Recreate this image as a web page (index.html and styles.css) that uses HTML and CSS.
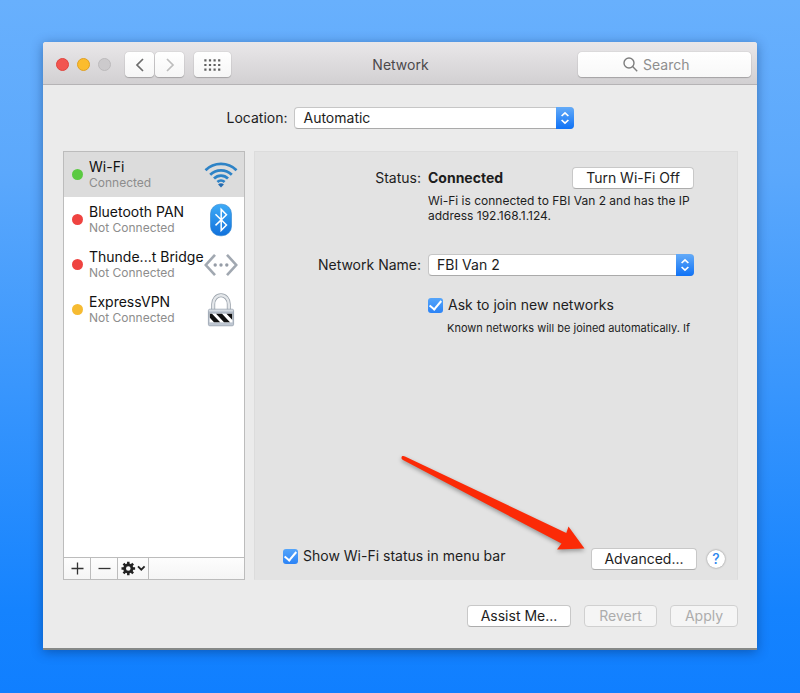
FILE: index.html
```html
<!DOCTYPE html>
<html lang="en">
<head>
<meta charset="utf-8">
<meta name="viewport" content="width=device-width, initial-scale=1">
<title>Network</title>
<link rel="stylesheet" href="styles.css">
</head>
<body>
<main class="window">
  <header class="titlebar">
    <div class="tools">
      <div class="lights">
        <button class="light close" aria-label="Close"></button>
        <button class="light minimize" aria-label="Minimize"></button>
        <button class="light zoom" aria-label="Zoom" disabled></button>
      </div>
      <div class="nav">
        <button class="tool" aria-label="Back"><svg width="10" height="16" viewBox="0 0 10 16"><path d="M8 2 2 8l6 6" fill="none" stroke="#6c6c6c" stroke-width="1.7"/></svg></button>
        <button class="tool" aria-label="Forward" disabled><svg width="10" height="16" viewBox="0 0 10 16"><path d="m2 2 6 6-6 6" fill="none" stroke="#bdbdbd" stroke-width="1.7"/></svg></button>
      </div>
      <button class="tool grid" aria-label="Show all"><svg width="17" height="12" viewBox="0 0 17 12" fill="none" stroke="#606060" stroke-width="2.2" stroke-dasharray="2.2 2.4"><path d="M.3 1.4h16M.3 6h16M.3 10.6h16"/></svg></button>
    </div>
    <h1 class="title">Network</h1>
    <label class="search">
      <svg width="15" height="15" viewBox="0 0 15 15" fill="none" stroke="#7d7d7d" stroke-width="1.4"><circle cx="6" cy="6" r="5"/><path d="m9.6 9.6 4.6 4.6"/></svg>
      <input type="search" placeholder="Search" aria-label="Search">
    </label>
  </header>

  <div class="body">
    <div class="location">
      <label for="location">Location:</label>
      <div class="popup">
        <select id="location"><option>Automatic</option></select>
        <svg class="cap" viewBox="0 0 18 22"><path d="M5.6 9 9 5.8 12.4 9M5.6 13 9 16.2l3.4-3.2" fill="none" stroke="#fff" stroke-width="1.7"/></svg>
      </div>
    </div>

    <div class="panes">
      <section class="sidebar" aria-label="Services">
        <ul class="services">
          <li class="service selected">
            <span class="dot green"></span>
            <span class="text"><span class="name">Wi-Fi</span><span class="state">Connected</span></span>
            <svg class="icon" width="34" height="34" viewBox="0 0 34 34" fill="none" stroke="#2e83c6" stroke-width="2.7"><path d="M1.5 12.2a22 22 0 0 1 31 0M6.2 16.8a15.2 15.2 0 0 1 21.6 0M10 20.5a9.8 9.8 0 0 1 14 0M13.4 24a5.2 5.2 0 0 1 7.2 0"/><path d="m17 29.4-2.9-2.9a4 4 0 0 1 5.8 0z" fill="#246bb0" stroke="none"/></svg>
          </li>
          <li class="service">
            <span class="dot red"></span>
            <span class="text"><span class="name">Bluetooth PAN</span><span class="state">Not Connected</span></span>
            <svg class="icon" width="34" height="34" viewBox="0 0 34 34"><defs><linearGradient id="bt" x2="0" y2="1"><stop stop-color="#3eabf7"/><stop offset="1" stop-color="#1171dc"/></linearGradient></defs><rect x="6.5" y="1.2" width="21" height="31.6" rx="9.6" fill="url(#bt)" stroke="#2b83cf" stroke-width=".6"/><path d="m11.5 11.3 11 10.7-5.3 5.4V6.4l5.3 5.3-11 10.7" fill="none" stroke="#fff" stroke-width="1.5"/></svg>
          </li>
          <li class="service">
            <span class="dot red"></span>
            <span class="text"><span class="name">Thunde...t Bridge</span><span class="state">Not Connected</span></span>
            <svg class="icon" width="34" height="34" viewBox="0 0 34 34"><path d="M11 6.8 1.8 17 11 27.2M23 6.8 32.2 17 23 27.2" fill="none" stroke="#a1a8b1" stroke-width="2.6"/><g fill="#969da7"><circle cx="11.2" cy="17" r="1.7"/><circle cx="17" cy="17" r="1.7"/><circle cx="22.8" cy="17" r="1.7"/></g></svg>
          </li>
          <li class="service">
            <span class="dot yellow"></span>
            <span class="text"><span class="name">ExpressVPN</span><span class="state">Not Connected</span></span>
            <svg class="icon" width="34" height="34" viewBox="0 0 34 34"><defs><linearGradient id="metal" x2="0" y2="1"><stop stop-color="#edf0f3"/><stop offset=".22" stop-color="#a9b3c0"/><stop offset="1" stop-color="#c1c9d3"/></linearGradient><clipPath id="band"><rect x="5.6" y="20.6" width="22.8" height="8.8"/></clipPath></defs><path d="M9.2 18v-6.8a7.8 9 0 0 1 15.6 0V18" fill="none" stroke="#9ba3ac" stroke-width="4"/><path d="M9.2 18v-6.8a7.8 9 0 0 1 15.6 0V18" fill="none" stroke="#e4e7ea" stroke-width="2.4"/><rect x="4.4" y="16.2" width="25.2" height="16.6" rx="1.4" fill="url(#metal)" stroke="#8d98a6" stroke-width=".7"/><rect x="5.6" y="20.6" width="22.8" height="8.8" fill="#fff"/><path clip-path="url(#band)" d="M5.6 20.6h2.2l8.6 8.8h-6.2l-4.6-4.8zM11.8 20.6h6l8.4 8.8h-6zM22.2 20.6h6.2v6.4z" fill="#111"/></svg>
          </li>
        </ul>
        <div class="actions">
          <button aria-label="Add service"><svg width="13" height="13" viewBox="0 0 13 13"><path d="M6.5.5v12M.5 6.5h12" stroke="#333" stroke-width="1.3"/></svg></button>
          <button aria-label="Remove service"><svg width="13" height="13" viewBox="0 0 13 13"><path d="M.5 6.5h12" stroke="#333" stroke-width="1.3"/></svg></button>
          <button class="gear" aria-label="Service options"><svg width="25" height="15" viewBox="0 0 25 15" fill="none" stroke="#222"><circle cx="7.3" cy="7.5" r="3.7" stroke-width="2.8"/><path d="M7.3.7v3M7.3 11.3v3M.5 7.5h3M11.1 7.5h3M2.5 2.7l2.1 2.1M10 10.2l2.1 2.1M12.1 2.7 10 4.8M4.6 10.2l-2.1 2.1" stroke-width="2.5"/><path d="m17 5.3 3.3 3.4 3.3-3.4" stroke-width="1.8"/></svg></button>
        </div>
      </section>

      <section class="details" aria-label="Wi-Fi">
        <div class="form">
          <span class="caption">Status:</span>
          <div class="status"><strong>Connected</strong><button class="push power">Turn Wi-Fi Off</button></div>
          <p class="note info">Wi-Fi is connected to FBI Van 2 and has the IP address 192.168.1.124.</p>
          <label class="caption network" for="network">Network Name:</label>
          <div class="popup network">
            <select id="network"><option>FBI Van 2</option></select>
            <svg class="cap" viewBox="0 0 18 22"><path d="M5.6 9 9 5.8 12.4 9M5.6 13 9 16.2l3.4-3.2" fill="none" stroke="#fff" stroke-width="1.7"/></svg>
          </div>
          <label class="check join"><input type="checkbox" checked>Ask to join new networks</label>
          <p class="note known">Known networks will be joined automatically. If</p>
        </div>
        <div class="bottom">
          <label class="check"><input type="checkbox" checked>Show Wi-Fi status in menu bar</label>
          <button class="push advanced">Advanced...</button>
          <button class="help" aria-label="Help">?</button>
        </div>
        <svg class="arrow" width="190" height="102" viewBox="0 0 190 102" aria-hidden="true"><path d="M2 3.3C3 2.7 4 3 5 3.5L166.3 80 168.5 73.5 184.5 95.5 157 96.5 161.5 90.5 3 7C1.5 6 1 4.5 2 3.3z" fill="#fb2a07"/></svg>
      </section>
    </div>

    <footer class="footer">
      <button class="push assist">Assist Me...</button>
      <button class="push revert" disabled>Revert</button>
      <button class="push apply" disabled>Apply</button>
    </footer>
  </div>
</main>
</body>
</html>
```
FILE: styles.css
```css
* {
  box-sizing: border-box;
}

body {
  margin: 0;
  min-height: 100vh;
  padding: 42px 43px 43px;
  display: flex;
  flex-direction: column;
  background: linear-gradient(#68b0fd, #5ba8fc 25%, #1583fe 88%, #107fff);
  font: 14px/18px Inter, "Liberation Sans", sans-serif;
  color: #1d1d1d;
}

button,
input,
select {
  font: inherit;
  color: inherit;
  margin: 0;
}

button {
  padding: 0;
  border: 0;
}

svg {
  display: block;
  flex: none;
}

.window {
  flex: 1;
  display: flex;
  flex-direction: column;
  background: #ebebeb;
  border-bottom: 2px solid #858887;
  border-radius: 3px 3px 0 0;
  box-shadow: 0 2px 12px rgba(0, 30, 80, 0.42);
}

.titlebar {
  display: grid;
  grid-template-columns: 1fr auto 1fr;
  align-items: center;
  height: 43px;
  padding: 3px 6px 0 13px;
  background: linear-gradient(#e9e7e9, #d2d0d2);
  border-bottom: 1px solid #b5b3b5;
  border-radius: 3px 3px 0 0;
}

.tools,
.lights,
.nav {
  display: flex;
  align-items: center;
}

.tools {
  gap: 10px;
}

.lights {
  gap: 8px;
  margin-right: 4px;
}

.light {
  width: 13px;
  height: 13px;
  border: 1px solid #e0443e;
  border-radius: 50%;
  background: #f25550;
}

.minimize {
  border-color: #e0a022;
  background: #fbbc2e;
}

.zoom {
  border-color: #bcbabc;
  background: #cccacc;
}

.nav {
  gap: 1px;
}

.tool {
  display: flex;
  align-items: center;
  justify-content: center;
  width: 29px;
  height: 25px;
  border-radius: 4px;
  background: linear-gradient(#fff, #f6f6f6);
  box-shadow: 0 0 1px rgba(0, 0, 0, 0.35), 0 1px 1px rgba(0, 0, 0, 0.2);
}

.grid {
  width: 37px;
}

.title {
  margin: 0;
  padding-right: 6px;
  font-size: 14px;
  font-weight: 400;
  color: #4b494b;
}

.search {
  justify-self: end;
  display: flex;
  align-items: center;
  gap: 5px;
  width: 173px;
  height: 25px;
  padding-left: 45px;
  border-radius: 4px;
  background: linear-gradient(#fff, #f8f8f8);
  box-shadow: 0 0 1px rgba(0, 0, 0, 0.35), 0 1px 1px rgba(0, 0, 0, 0.2);
}

.search input {
  flex: 1;
  min-width: 0;
  padding: 0;
  border: 0;
  outline: 0;
  background: none;
}

.search input::placeholder {
  color: #8e8e8e;
}

.body {
  flex: 1;
  display: flex;
  flex-direction: column;
  padding: 22px 19px 21px 20px;
}

.location {
  display: flex;
  align-items: center;
  justify-content: center;
  gap: 7px;
}

.location .popup {
  width: 280px;
}

.popup {
  position: relative;
  height: 22px;
}

.popup select {
  appearance: none;
  width: 100%;
  height: 22px;
  padding: 0 26px 0 8px;
  border: 1px solid #c6c6c6;
  border-bottom-color: #aaa;
  border-radius: 4px;
  background: #fff;
}

.cap {
  position: absolute;
  top: 0;
  right: 0;
  width: 18px;
  height: 22px;
  border-radius: 0 4px 4px 0;
  background: linear-gradient(#64abf8, #0f72f6);
  pointer-events: none;
}

.panes {
  flex: 1;
  display: flex;
  gap: 9px;
  margin-top: 22px;
}

.sidebar {
  display: flex;
  flex-direction: column;
  width: 182px;
  border: 1px solid #bcbcbc;
  background: #fff;
}

.services {
  flex: 1;
  margin: 0;
  padding: 0;
  list-style: none;
}

.service {
  display: flex;
  align-items: center;
  height: 45px;
  padding: 0 6px 0 8px;
}

.selected {
  background: #dcdcdc;
}

.dot {
  flex: none;
  width: 11px;
  height: 11px;
  margin-right: 6px;
  border-radius: 50%;
}

.green {
  background: #5bca42;
}

.red {
  background: #ef4340;
}

.yellow {
  background: #f6bb32;
}

.text {
  flex: 1;
  min-width: 0;
  white-space: nowrap;
}

.name,
.state {
  display: block;
  line-height: 16px;
  color: #111;
}

.state {
  font-size: 12px;
  color: #8d8d8d;
}

.actions {
  display: flex;
  height: 22px;
  border-top: 1px solid #bcbcbc;
  background: linear-gradient(#fdfdfd, #f5f5f5);
}

.actions button {
  display: flex;
  align-items: center;
  justify-content: center;
  width: 27px;
  border-right: 1px solid #bcbcbc;
  background: none;
}

.actions .gear {
  width: 31px;
}

.details {
  position: relative;
  flex: 1;
  display: flex;
  flex-direction: column;
  justify-content: space-between;
  background: #e3e3e3;
  border: 1px solid #dcdcdc;
  border-bottom-color: #e3e3e3;
}

.form {
  display: grid;
  grid-template-columns: 1fr 266px;
  column-gap: 7px;
  align-items: center;
  padding: 15px 43px 0 0;
}

.caption {
  text-align: right;
}

.status {
  display: flex;
  align-items: center;
  justify-content: space-between;
}

.push {
  height: 22px;
  padding: 0;
  border: 1px solid #c8c8c8;
  border-bottom-color: #acacac;
  border-radius: 4px;
  background: #fff;
  line-height: 20px;
  white-space: nowrap;
}

.push:disabled {
  border-color: #d0d0d0;
  background: #f5f5f5;
  color: #acacac;
}

.power {
  width: 122px;
}

.note {
  grid-column: 2;
  margin: 0;
  font-size: 11px;
  line-height: 15px;
}

.info {
  margin-top: 4px;
  font-size: 12px;
}

.network {
  margin-top: 31px;
}

.check {
  display: flex;
  align-items: center;
  gap: 5px;
}

.check input {
  appearance: none;
  display: grid;
  place-items: center;
  width: 15px;
  height: 15px;
  border-radius: 3px;
  background: linear-gradient(#55a5fa, #2b83f6);
}

.check input:checked::after {
  content: "";
  width: 5px;
  height: 10px;
  margin-bottom: 3px;
  border: solid #fff;
  border-width: 0 2px 2px 0;
  transform: rotate(40deg);
}

.join {
  grid-column: 2;
  margin-top: 20px;
}

.known {
  margin-top: 7px;
  padding-left: 19px;
}

.bottom {
  display: flex;
  align-items: center;
  padding: 0 12px 8px 28px;
}

.bottom .check {
  padding-bottom: 6px;
}

.advanced {
  width: 106px;
  margin-left: auto;
}

.help {
  width: 18px;
  height: 18px;
  margin-left: 10px;
  border-radius: 50%;
  background: #fff;
  box-shadow: 0 0 2px rgba(0, 0, 0, 0.45);
  color: #2d87ee;
  font-weight: 500;
}

.arrow {
  position: absolute;
  right: 147px;
  bottom: 24px;
  filter: drop-shadow(0 2px 2px rgba(0, 0, 0, 0.35));
  pointer-events: none;
}

.footer {
  display: flex;
  justify-content: flex-end;
  gap: 13px;
  margin-top: 25px;
}

.assist {
  width: 104px;
}

.revert {
  width: 73px;
}

.apply {
  width: 68px;
}
```
